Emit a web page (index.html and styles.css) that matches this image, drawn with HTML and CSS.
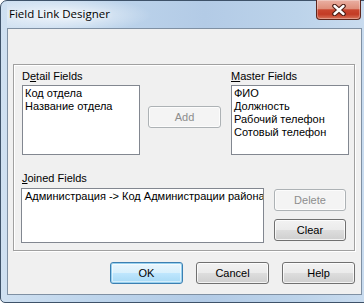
FILE: index.html
```html
<!DOCTYPE html>
<html lang="en">

<head>
    <meta charset="UTF-8">
    <title>Field Link Designer</title>
    <link rel="stylesheet" href="styles.css">
</head>

<body>
    <div class="window">
        <div class="titlebar">
            <span class="title">Field Link Designer</span>
            <div class="close-btn">
                <svg width="14" height="12" viewBox="0 0 14 12">
                    <path d="M2.5 2 L11.5 10 M11.5 2 L2.5 10" stroke="#4b1d15" stroke-width="4.6" stroke-linecap="round" fill="none"/>
                    <path d="M2.5 2 L11.5 10 M11.5 2 L2.5 10" stroke="#ffffff" stroke-width="2.4" stroke-linecap="round" fill="none"/>
                </svg>
            </div>
        </div>
        <div class="client">
            <div class="panel">
                <div class="row-top">
                    <div class="field-col">
                        <div class="field-label">D<u>e</u>tail Fields</div>
                        <div class="listbox list-small">
                            <div class="item">Код отдела</div>
                            <div class="item">Название отдела</div>
                        </div>
                    </div>
                    <button class="btn btn-add" disabled>Add</button>
                    <div class="field-col master-col">
                        <div class="field-label"><u>M</u>aster Fields</div>
                        <div class="listbox list-small">
                            <div class="item">ФИО</div>
                            <div class="item">Должность</div>
                            <div class="item">Рабочий телефон</div>
                            <div class="item">Сотовый телефон</div>
                        </div>
                    </div>
                </div>
                <div class="row-joined">
                    <div class="joined-col">
                        <div class="field-label joined-label"><u>J</u>oined Fields</div>
                        <div class="listbox list-joined">
                            <div class="item">Администрация -&gt; Код Администрации района</div>
                        </div>
                    </div>
                    <div class="side-btns">
                        <button class="btn" disabled>Delete</button>
                        <button class="btn">Clear</button>
                    </div>
                </div>
            </div>
            <div class="footer">
                <button class="btn btn-default">OK</button>
                <button class="btn">Cancel</button>
                <button class="btn">Help</button>
            </div>
        </div>
    </div>
</body>
</html>
```

FILE: styles.css
```css
body {
    margin: 0;
    width: 364px;
    height: 304px;
    overflow: hidden;
    background-color: #ffffff;
    font-family: 'Liberation Sans', Arial, sans-serif;
    font-size: 11px;
    color: #000;
}

.window {
    width: 372px;
    height: 303px;
    box-sizing: border-box;
    display: flex;
    flex-direction: column;
    padding: 0 9px 7px 6px;
    border: 1px solid #3e5269;
    border-radius: 7px 7px 5px 5px;
    background: linear-gradient(90deg, #cfe0f1 0%, #bed5ec 25%, #b3cbe6 55%, #bcd3ea 80%, #cadcef 100%);
}

.titlebar {
    height: 27px;
    display: flex;
    justify-content: space-between;
    align-items: flex-start;
    background: radial-gradient(ellipse 90px 18px at 55px 14px, rgba(255, 255, 255, 0.75), rgba(255, 255, 255, 0));
}

.title {
    font-family: 'Open Sans', 'Noto Sans', sans-serif;
    font-size: 11.5px;
    line-height: 16px;
    margin-top: 5px;
    padding-left: 2px;
    color: #000;
    text-shadow: 0 0 6px #fff;
}

.close-btn {
    width: 45px;
    height: 20px;
    box-sizing: border-box;
    margin-top: -1px;
    margin-right: 1px;
    display: flex;
    align-items: center;
    justify-content: center;
    border: 1px solid #5e261c;
    border-top: none;
    border-radius: 0 0 4px 4px;
    background: linear-gradient(#eab0a3 0%, #df8f7b 45%, #c9462f 52%, #c33b25 75%, #d7735a 100%);
    box-shadow: inset 0 0 0 1px rgba(255, 255, 255, 0.3);
}

.client {
    flex: 1;
    box-sizing: border-box;
    border: 1px solid #7f90a3;
    background-color: #f0f0f0;
    display: flex;
    flex-direction: column;
}

.panel {
    width: 342px;
    height: 187px;
    box-sizing: border-box;
    margin: 35px 0 0 5px;
    padding: 5px 5px 7px 8px;
    border: 1px solid #a0a0a0;
    box-shadow: inset 1px 1px 0 #fff, 1px 1px 0 #fff;
}

.row-top {
    display: flex;
    align-items: flex-start;
}

.field-col {
    width: 118px;
}

.master-col {
    margin-left: auto;
}

.field-label {
    height: 13px;
    line-height: 13px;
    margin-bottom: 2px;
    white-space: nowrap;
}

.listbox {
    box-sizing: border-box;
    background-color: #fff;
    border: 1px solid #828790;
    padding: 1px 2px;
    overflow: hidden;
}

.list-small {
    width: 118px;
    height: 70px;
}

.item {
    line-height: 13px;
    white-space: nowrap;
}

.row-joined {
    display: flex;
    align-items: flex-start;
    margin-top: 17px;
}

.joined-col {
    margin-left: -1px;
}

.joined-label {
    margin-left: 1px;
    margin-bottom: 3px;
}

.list-joined {
    width: 243px;
    height: 55px;
    padding-left: 3px;
}

.side-btns {
    display: flex;
    flex-direction: column;
    gap: 8px;
    margin: 17px 0 0 10px;
}

.side-btns .btn {
    width: 72px;
}

.btn {
    width: 73px;
    height: 22px;
    box-sizing: border-box;
    padding: 0;
    font-family: 'Liberation Sans', Arial, sans-serif;
    font-size: 11px;
    color: #000;
    border: 1px solid #707070;
    border-radius: 3px;
    background: linear-gradient(#f2f2f2 0%, #ebebeb 48%, #dddddd 52%, #cfcfcf 100%);
    box-shadow: inset 0 0 0 1px rgba(255, 255, 255, 0.75);
}

.btn:disabled {
    color: #8d8d8d;
    border-color: #adb2b5;
    background: #f4f4f4;
    box-shadow: inset 0 0 0 1px #fcfcfc;
}

.btn-add {
    margin: 36px 0 0 8px;
}

.btn-default {
    border-color: #3c7fb1;
    background: linear-gradient(#eaf6fd 0%, #d9f0fc 48%, #bee6fd 52%, #a7d9f5 100%);
    box-shadow: inset 0 0 0 1px #98d1ef, inset 0 0 0 2px rgba(255, 255, 255, 0.5);
}

.footer {
    display: flex;
    justify-content: flex-end;
    gap: 13px;
    margin: 11px 6px 0 0;
}
```
